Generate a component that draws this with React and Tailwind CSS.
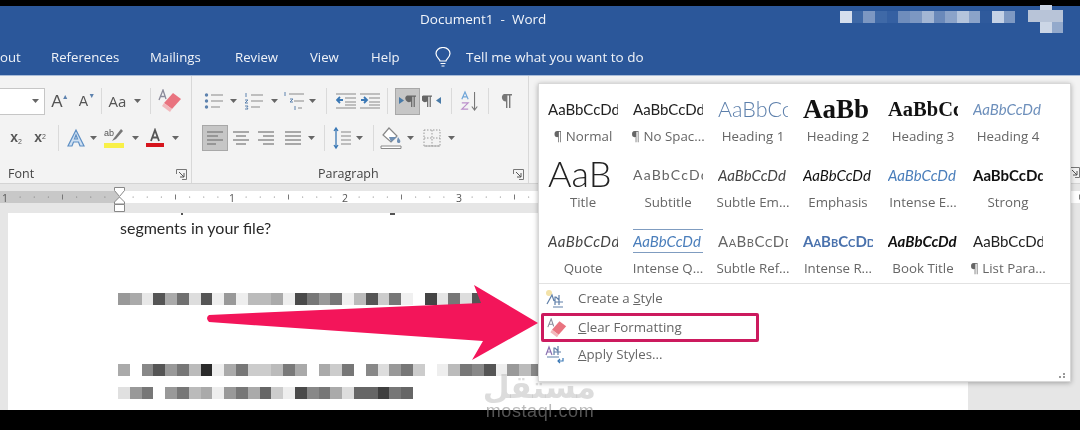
import React from "react";

const UI = "font-['Open_Sans',sans-serif]";
const Caret = () => (
  <svg width="7" height="4" viewBox="0 0 7 4"><path d="M0 0h7L3.5 4z" fill="#666" /></svg>
);
const Slot = ({ w, children }) => <div className={`flex items-center justify-center h-full shrink-0 ${w}`}>{children}</div>;
const Sep = ({ w }) => <div className={`flex items-center justify-center h-full shrink-0 ${w}`}><div className="w-px h-[26px] bg-[#dadada]" /></div>;

const Bullets = () => (
  <svg width="20" height="20" viewBox="0 0 20 20" stroke="#8a8a8a" strokeWidth="1.2">
    <path d="M7 4h12M7 10h12M7 16h9" />
    <g fill="#5d82ae" stroke="none"><circle cx="2.5" cy="4" r="1.7" /><circle cx="2.5" cy="10" r="1.7" /><circle cx="2.5" cy="16" r="1.7" /></g>
  </svg>
);
const Numbers = () => (
  <svg width="20" height="20" viewBox="0 0 20 20" stroke="#8a8a8a" strokeWidth="1.2">
    <path d="M7 4h12M7 10h12M7 16h9" />
    <path d="M2 2v4M1 9h3l-3 3h3M1 15h3l-1 1.5 1 1.5H1" stroke="#5d82ae" fill="none" strokeWidth="1" />
  </svg>
);
const Multi = () => (
  <svg width="22" height="20" viewBox="0 0 22 20" stroke="#8a8a8a" strokeWidth="1.2">
    <path d="M6 3h15M11 10h10M15 17h4" />
    <path d="M2 1v4M7 8h3l-3 3h3M12 15v4" stroke="#5d82ae" fill="none" strokeWidth="1" />
  </svg>
);
const Indent = ({ flip }) => (
  <svg width="20" height="18" viewBox="0 0 20 18" stroke="#8a8a8a" strokeWidth="1.2">
    <path d="M0 2h20M9 6h11M9 10h11M9 13h11M0 16h20" />
    {flip ? <path d="M1 8h5M4 5l3 3-3 3" stroke="#3a78b5" strokeWidth="1.8" fill="none" /> : <path d="M7 8H2M4 5L1 8l3 3" stroke="#3a78b5" strokeWidth="1.8" fill="none" />}
  </svg>
);
const Para = ({ c = "#777", s = 18 }) => (
  <svg width={s} height={s} viewBox="0 0 18 18" fill={c}>
    <path d="M8 2h8v1.6h-1.6V16H13V3.6h-1.6V16H10V9.500A4 4 0 0 1 8 2z" />
  </svg>
);
const Dir = ({ rtl }) => (
  <svg width="20" height="14" viewBox="0 0 20 14">
    <g fill="#666"><path d="M9 1.500h9v1.200h-1.200V13h-1.200V2.700h-1.300V13h-1.200V7.500A3 3 0 0 1 9 1.500z" transform={rtl ? "translate(-8 0)" : ""} /></g>
    <path d={rtl ? "M19 3v7l-5-3.500z" : "M1 3v7l5-3.500z"} fill="#4a7ba8" />
  </svg>
);
const Sort = () => (
  <svg width="20" height="24" viewBox="0 0 22 24">
    <path d="M2 10L5.500 2 9 10M3.500 7.500h4" fill="none" stroke="#6fa5d8" strokeWidth="1.300" />
    <path d="M2 14h7l-7 7h7" fill="none" stroke="#bb8fcb" strokeWidth="1.300" />
    <path d="M16 2v19M13 18l3 4 3-4" fill="none" stroke="#777" strokeWidth="1.200" />
  </svg>
);
const Align = ({ rows }) => (
  <svg width="18" height="16" viewBox="0 0 18 16" stroke="#777" strokeWidth="1.200">
    {rows.map((d, i) => <path key={i} d={d} />)}
  </svg>
);
const LineSp = () => (
  <svg width="18" height="24" viewBox="0 0 18 24" stroke="#888" strokeWidth="1.200" fill="none">
    <path d="M8 6h10M8 10h10M8 14h10M8 18h10" />
    <path d="M3 2v20M1 5l2-3 2 3M1 19l2 3 2-3" stroke="#3a78b5" strokeWidth="1.300" />
  </svg>
);
const Shade = () => (
  <svg width="22" height="24" viewBox="0 0 22 24">
    <path d="M9 2l8 8-6 6-8-7z" fill="#fff" stroke="#888" strokeWidth="1.200" />
    <path d="M9 11h8l-6 5z" fill="#6f8fb3" />
    <path d="M18 11c2 3 3 4 2 5.500-1 1-3 .5-3-1 0-1 .5-3 1-4.500z" fill="#6f8fb3" />
    <path d="M1 20h20v2.500H1z" fill="#fff" stroke="#888" />
  </svg>
);
const Borders = () => (
  <svg width="18" height="18" viewBox="0 0 18 18" stroke="#999" strokeDasharray="1.500 1.500" fill="none">
    <path d="M1 1h16v16H1zM1 9h16M9 1v16" />
    <path d="M1 17h16" strokeDasharray="none" stroke="#aaa" />
  </svg>
);
const Launcher = () => (
  <svg width="11" height="11" viewBox="0 0 11 11" fill="none" stroke="#777">
    <path d="M.5 5V.5h10v10H6" />
    <path d="M3 3l5 5M8 4v4H4" stroke="#555" />
  </svg>
);
const Eraser = ({ s = 24 }) => (
  <svg width={s} height={s} viewBox="0 0 24 24">
    <path d="M1 11L5 1l3 9M2.500 7.500h4" fill="none" stroke="#8a8a9a" strokeWidth="1.300" />
    <path d="M15 4l8 6-9 10-8-6z" fill="#e9737f" />
    <path d="M6 14l8 6-2 3-8-6z" fill="#f2b8bc" />
  </svg>
);
const Lamp = () => (
  <svg width="16" height="21" viewBox="0 0 16 21" fill="none" stroke="#fff" strokeWidth="1.200">
    <path d="M5 14c0-2-4-3.500-4-7.500a7 6 0 0 1 14 0C15 10.500 11 12 11 14z" />
    <path d="M5.500 16.500h5M6.500 19h3" />
  </svg>
);

function Ribbon() {
  return (
    <div className="flex h-[108px] bg-[#f3f3f3] border-b border-[#d4d4d4]">
      <div className="w-[192px] shrink-0 border-r border-[#d8d8d8] flex flex-col pt-[12px]">
        <div className="flex h-[27px] items-center">
          <div className="w-[45px] h-full bg-white border border-[#c6c6c6] border-l-0 flex items-center justify-end pr-[5px] shrink-0"><Caret /></div>
          <Slot w="w-[27px]"><span className="text-[17px] text-[#555] font-['Liberation_Sans',sans-serif] relative -ml-[3px]">A<span className="absolute -right-[6px] top-[3px] text-[7px] text-[#5d82ae]">▲</span></span></Slot>
          <Slot w="w-[26px]"><span className="text-[14px] text-[#555] font-['Liberation_Sans',sans-serif] relative -ml-[3px]">A<span className="absolute -right-[7px] top-0 text-[7px] text-[#5d82ae]">▼</span></span></Slot>
          <Sep w="w-[6px]" />
          <Slot w="w-[27px]"><span className="text-[15px] text-[#555]">Aa</span></Slot>
          <Slot w="w-[12px]"><Caret /></Slot>
          <Sep w="w-[15px]" />
          <Slot w="w-[24px]"><Eraser /></Slot>
        </div>
        <div className="flex h-[27px] items-center mt-[10px] pl-[4px]">
          <Slot w="w-[24px]"><span className="text-[14px] font-bold text-[#555] font-['Liberation_Sans',sans-serif]">x<sub className="text-[7px] font-normal">2</sub></span></Slot>
          <Slot w="w-[24px]"><span className="text-[14px] font-bold text-[#555] font-['Liberation_Sans',sans-serif]">x<sup className="text-[7px] font-normal">2</sup></span></Slot>
          <Sep w="w-[12px]" />
          <Slot w="w-[24px]"><svg width="20" height="20" viewBox="0 0 20 20"><path d="M10 2L2 18h4l1.500-4h5L14 18h4zM8.500 11L10 7l1.500 4z" fill="#cfe0f2" stroke="#5e8fc4" strokeWidth="1.200" /></svg></Slot>
          <Slot w="w-[10px]"><Caret /></Slot>
          <Slot w="w-[32px]"><svg width="22" height="22" viewBox="0 0 22 22"><text x="1" y="9" fontSize="9" fontFamily="Liberation Sans" fill="#555">ab</text><path d="M18 2l-7 9-2 3 4-2 7-8z" fill="#777" /><rect x="1" y="16" width="20" height="5" fill="#f8f048" /></svg></Slot>
          <Slot w="w-[10px]"><Caret /></Slot>
          <Slot w="w-[30px]"><svg width="20" height="20" viewBox="0 0 20 20"><path d="M6 13L10 2l4 11M7.500 9.500h5" fill="none" stroke="#555" strokeWidth="1.800" /><rect x="1" y="15" width="18" height="4" fill="#d6141c" /></svg></Slot>
          <Slot w="w-[10px]"><Caret /></Slot>
        </div>
        <div className="flex items-center justify-between h-[18px] mt-[14px] pl-[8px] pr-[4px]">
          <span className="text-[12.5px] text-[#444]">Font</span>
          <Launcher />
        </div>
      </div>
      <div className="w-[337px] shrink-0 border-r border-[#d8d8d8] flex flex-col pt-[12px]">
        <div className="flex h-[27px] items-center pl-[10px]">
          <Slot w="w-[24px]"><Bullets /></Slot>
          <Slot w="w-[14px]"><Caret /></Slot>
          <Slot w="w-[28px]"><Numbers /></Slot>
          <Slot w="w-[12px]"><Caret /></Slot>
          <Slot w="w-[28px]"><Multi /></Slot>
          <Slot w="w-[8px]"><Caret /></Slot>
          <Sep w="w-[20px]" />
          <Slot w="w-[20px]"><Indent /></Slot>
          <div className="w-[4px] shrink-0" />
          <Slot w="w-[20px]"><Indent flip /></Slot>
          <Sep w="w-[15px]" />
          <div className="w-[25px] h-full bg-[#c6c6c6] border border-[#a8a8a8] flex items-center justify-center shrink-0"><Dir /></div>
          <Slot w="w-[24px]"><Dir rtl /></Slot>
          <Sep w="w-[14px]" />
          <Slot w="w-[24px]"><Sort /></Slot>
          <Sep w="w-[12px]" />
          <Slot w="w-[22px]"><Para /></Slot>
        </div>
        <div className="flex h-[27px] items-center mt-[10px] pl-[10px]">
          <div className="w-[26px] h-full bg-[#c6c6c6] border border-[#a8a8a8] flex items-center justify-center shrink-0"><Align rows={["M1 2h16", "M1 6h11", "M1 10h16", "M1 14h9"]} /></div>
          <Slot w="w-[25px]"><Align rows={["M1 2h16", "M4 6h10", "M1 10h16", "M4 14h10"]} /></Slot>
          <Slot w="w-[26px]"><Align rows={["M1 2h16", "M6 6h11", "M1 10h16", "M6 14h11"]} /></Slot>
          <Slot w="w-[27px]"><Align rows={["M1 2h16", "M1 6h16", "M1 10h16", "M1 14h16"]} /></Slot>
          <Slot w="w-[10px]"><Caret /></Slot>
          <Sep w="w-[16px]" />
          <Slot w="w-[20px]"><LineSp /></Slot>
          <Slot w="w-[14px]"><Caret /></Slot>
          <Sep w="w-[14px]" />
          <Slot w="w-[22px]"><Shade /></Slot>
          <Slot w="w-[16px]"><Caret /></Slot>
          <Slot w="w-[28px]"><Borders /></Slot>
          <Slot w="w-[10px]"><Caret /></Slot>
        </div>
        <div className="flex items-center h-[18px] mt-[14px] pr-[4px] relative">
          <span className="text-[12.5px] text-[#444] ml-[126px]">Paragraph</span>
          <span className="ml-auto"><Launcher /></span>
        </div>
      </div>
      <div className="flex-1 flex justify-end items-end pb-[5px]"><Launcher /></div>
    </div>
  );
}

function Ruler() {
  const ticks = [];
  for (let i = -8; i <= 68; i++) {
    const x = 119 + i * 14.125;
    if (i === 0 || i % 8 === 0) continue;
    if (i % 4 === 0) ticks.push(<path key={i} d={`M${x} 194.500v5`} stroke="#777" />);
    else ticks.push(<circle key={i} cx={x} cy="197" r=".6" fill="#777" />);
  }
  return (
    <div className="h-[29px] bg-[#e6e6e6] pt-[7px] relative">
      <svg width="1080" height="14" viewBox="0 191 1080 14" className="block">
        <rect x="0" y="191" width="119" height="12" fill="#c8c8c8" />
        <rect x="119" y="191" width="961" height="12" fill="#fff" />
        {ticks}
        {[[5, "1"], [232, "1"], [345, "2"], [459, "3"]].map(([x, t], i) => (
          <text key={i} x={x} y="201.500" textAnchor="middle" fontSize="10.500" fill="#555" fontFamily="Open Sans">{t}</text>
        ))}
      </svg>
      <svg width="14" height="29" viewBox="0 0 14 29" className="absolute left-[113px] top-0" fill="#fff" stroke="#888">
        <path d="M1.500 3.500h10v3l-5 6-5-6zM1.500 20v-2l5-5 5 5v2z" />
        <path d="M1.500 20.500h10v7h-10z" />
      </svg>
    </div>
  );
}

const R1 = ["#999","#aaa","#e8e8e8","#555","#aaa","#707070","#ddd","#555","#eee","#999","#eee","#bbb","#bbb","#aaa","#eee","#4a4a4a","#777","#999","#777","#f0f0f0","#bbb","#555","#ccc","#777","#f0f0f0","#fff","#444","#e5e5e5","#777","#ddd","#555"];
const R2 = ["#aaa","#fff","#888","#555","#999","#777","#bbb","#2a2a2a","#eee","#aaa","#777","#ccc","#ccc","#bbb","#7a7a7a","#aaa","#fff","#aaa","#ccc","#777","#fff","#888","#ddd","#999","#777","#ccc","#fff","#eee","#bbb","#777","#888","#555","#eee","#999","#bbb","#888"];
const R3 = ["#e0e0e0","#999","#777","#fff","#999","#777","#bbb","#aaa","#eee","#999","#777","#aaa","#666","#ccc","#eee","#4a4a4a","#888","#777","#aaa","#ddd","#666","#666","#3f3f3f","#777","#666"];
const Mosaic = ({ cells, cls, w = "w-[11.8px]" }) => (
  <div className={`flex h-[12px] ${cls || ""}`}>
    {cells.map((c, i) => <div key={i} className={`${w} h-full shrink-0`} style={{ background: c }} />)}
  </div>
);

const Lato = "font-['Lato',sans-serif] leading-[20px]";
const gallery = [
  ["AaBbCcDd", `${Lato} text-[15px] text-[#222]`, "¶ Normal"],
  ["AaBbCcDd", `${Lato} text-[15px] text-[#222]`, "¶ No Spac..."],
  ["AaBbCcDd", "font-['Lato',sans-serif] leading-[30px] text-[21.500px] font-light text-[#5c7fab]", "Heading 1"],
  ["AaBb", "font-['Liberation_Serif',serif] leading-[30px] text-[27px] font-bold text-[#111]", "Heading 2"],
  ["AaBbCcDd", "font-['Liberation_Serif',serif] leading-[30px] text-[20.500px] font-bold text-[#111]", "Heading 3"],
  ["AaBbCcDd", `${Lato} italic text-[15px] text-[#6d8fbb]`, "Heading 4"],
  ["AaB", "font-['Lato',sans-serif] font-light text-[36px] leading-[40px] -mt-[5px] text-[#222]", "Title"],
  ["AaBbCcDd", `${Lato} text-[14px] tracking-[1.200px] text-[#666]`, "Subtitle"],
  ["AaBbCcDd", `${Lato} italic text-[15px] text-[#444]`, "Subtle Em..."],
  ["AaBbCcDd", `${Lato} italic text-[15px] text-[#111]`, "Emphasis"],
  ["AaBbCcDd", `${Lato} italic text-[15px] text-[#4a7ebb]`, "Intense E..."],
  ["AaBbCcDd", `${Lato} font-bold text-[15px] text-[#111]`, "Strong"],
  ["AaBbCcDd", `${Lato} italic tracking-[.5px] text-[15px] text-[#444]`, "Quote"],
  ["AaBbCcDd", `${Lato} italic text-[15px] text-[#4a7ebb] border-y border-[#7f9cc0] py-[1px]`, "Intense Q..."],
  ["AaBbCcDd", `${Lato} text-[15px] text-[#666] [font-variant:small-caps] tracking-[.5px]`, "Subtle Ref..."],
  ["AaBbCcDd", `${Lato} font-bold text-[15px] text-[#4a72ad] [font-variant:small-caps]`, "Intense R..."],
  ["AaBbCcDd", `${Lato} italic font-bold text-[15px] text-[#111]`, "Book Title"],
  ["AaBbCcDd", `${Lato} text-[15px] text-[#222]`, "¶ List Para..."],
];

function Popup() {
  return (
    <div className={`absolute left-[538px] top-[83px] w-[533px] h-[299px] bg-white border border-[#d8d8d8] shadow-[0_1px_5px_rgba(0,0,0,0.3)] ${UI}`}>
      <div className="grid grid-cols-[repeat(6,85px)] auto-rows-[66px] pl-[6px] pt-[10px] h-[199px]">
        {gallery.map(([s, cls, l], i) => (
          <div key={i} className="flex flex-col items-start pl-[3px]">
            <div className="h-[30px] w-[70px] flex items-center">
              <div className={`w-[70px] overflow-hidden whitespace-nowrap ${cls}`}>{s}</div>
            </div>
            <div className="w-[76px] -ml-[3px] text-center text-[13.300px] leading-[18px] mt-[3px] text-[#666] whitespace-nowrap">{l}</div>
          </div>
        ))}
      </div>
      <div className="h-px bg-[#e2e2e2]" />
      <div className="pt-[1px]">
        <div className="flex items-center h-[28px] pl-[6px]">
          <svg width="20" height="20" viewBox="0 0 20 20"><circle cx="4" cy="4" r="3" fill="#f3e2a8" /><path d="M2 15L7 6l2 6M10 16V8h1l3 3M14 6v10M10 13h8M8 18h10" fill="none" stroke="#5f7fa8" strokeWidth="1.200" /></svg>
          <span className="ml-[13px] text-[13.300px] text-[#666]">Create a <u>S</u>tyle</span>
        </div>
        <div className="flex items-center h-[29px] w-[218px] ml-[2px] pl-[3px] -mb-[1px] border-[3px] border-[#cc1a5e] rounded-[2px]">
          <Eraser s={20} />
          <span className="ml-[11px] text-[13.300px] text-[#666]"><u>C</u>lear Formatting</span>
        </div>
        <div className="flex items-center h-[28px] pl-[6px]">
          <svg width="20" height="20" viewBox="0 0 20 20"><path d="M1 10L4 2l3 8M2 7h4" fill="none" stroke="#8a70b0" strokeWidth="1.200" /><path d="M9 10V3h1l3 3M13 1v9M9 7h7M2 12h12" fill="none" stroke="#5f7fa8" strokeWidth="1.200" /><path d="M18 13v3h-5M15 14l-2 2 2 2" fill="none" stroke="#3a78b5" strokeWidth="1.200" /></svg>
          <span className="ml-[13px] text-[13.300px] text-[#666]"><u>A</u>pply Styles...</span>
        </div>
      </div>
      <div className="absolute right-[4px] bottom-[3px] grid grid-cols-2 gap-[1px] w-[7px]">
        <span /><span className="w-[2px] h-[2px] bg-[#999]" />
        <span className="w-[2px] h-[2px] bg-[#999]" /><span className="w-[2px] h-[2px] bg-[#999]" />
      </div>
    </div>
  );
}

export default function App() {
  return (
    <div className={`relative w-[1080px] h-[430px] overflow-hidden bg-black ${UI} blur-[0.45px]`}>
      <div>
        <div className="h-[6px] bg-black" />
        <div className="h-[34px] bg-[#2b579a] flex items-start pl-[420px]">
          <span className="text-[13.5px] leading-[26px] text-[#f2f5fa] w-[420px] whitespace-pre">Document1  -  Word</span>
          <div className="flex flex-col relative">
            <Mosaic cls="mt-[5px]" cells={["#d5deed","#3e68a6","#7c97c2","#3f69a7","#3560a2","#6f8dbc","#7c97c2","#a3b6d4","#6a89ba","#8ba3c9","#b4c4dc","#8ba3c9","#2f5a9c","#c5d2e6","#7e99c3"]} w="w-[11.700px]" />
          </div>
          <div className="ml-[13px] -mt-[1px] w-[35px] flex flex-col">
            <div className="h-[5px] w-[12px] ml-[12px] bg-[#ccd5e4]" />
            <div className="h-[12px] bg-[#b8c4d8]" />
            <div className="h-[11px] flex ml-[12px]"><div className="w-[12px] bg-[#ccd6e6]" /><div className="w-[11px] bg-[#93a9cb]" /></div>
          </div>
        </div>
        <div className="h-[35px] bg-[#2b579a] flex items-center text-[13.200px] text-[#f0f3f8] whitespace-nowrap">
          <span className="w-[51px]">out</span>
          <span className="w-[99px]">References</span>
          <span className="w-[85px]">Mailings</span>
          <span className="w-[75px]">Review</span>
          <span className="w-[61px]">View</span>
          <span className="w-[64px]">Help</span>
          <span className="w-[31px] flex"><Lamp /></span>
          <span className="text-[13.500px]">Tell me what you want to do</span>
        </div>
        <div className="h-px bg-[#a9bcd8]" />
        <Ribbon />
        <Ruler />
        <div className="h-[197px] flex bg-[#e6e6e6]">
          <div className="w-[8px] shrink-0" />
          <div className="w-[960px] bg-white pl-[110px] shrink-0 overflow-hidden">
            <div className="flex h-[2px]"><div className="ml-[63px] w-[2px] bg-[#555]" /><div className="ml-[207px] w-[5px] bg-[#555]" /></div>
            <div className="ml-[2px] pt-[1px] text-[16px] leading-[24px] text-[#2a2a2a] font-['Lato',sans-serif]">segments in your file?</div>
            <Mosaic cells={R1} cls="mt-[53px]" />
            <Mosaic cells={R2} cls="mt-[59px]" />
            <Mosaic cells={R3} cls="mt-[11px]" />
          </div>
        </div>
        <div className="h-[20px] bg-black" />
      </div>
      <Popup />
      <svg width="340" height="85" viewBox="205 282 340 85" className="absolute left-[205px] top-[282px]">
        <path d="M209 315L481 303 474 285 538 323 472 360 483 341 209 322Q205 318 209 315Z" fill="#f3155a" />
      </svg>
      <div dir="rtl" className="absolute left-[484px] top-[367px] w-[112px] text-center text-[31px] leading-[40px] font-bold text-[#9a9a9a]/35 font-['DejaVu_Sans',sans-serif] whitespace-nowrap">مستقل</div>
      <div className="absolute left-[482px] top-[402px] w-[116px] text-center text-[18px] leading-[18px] tracking-[0.6px] text-[#8c8c8c]/60 font-['Liberation_Sans',sans-serif]">mostaql.com</div>
    </div>
  );
}
